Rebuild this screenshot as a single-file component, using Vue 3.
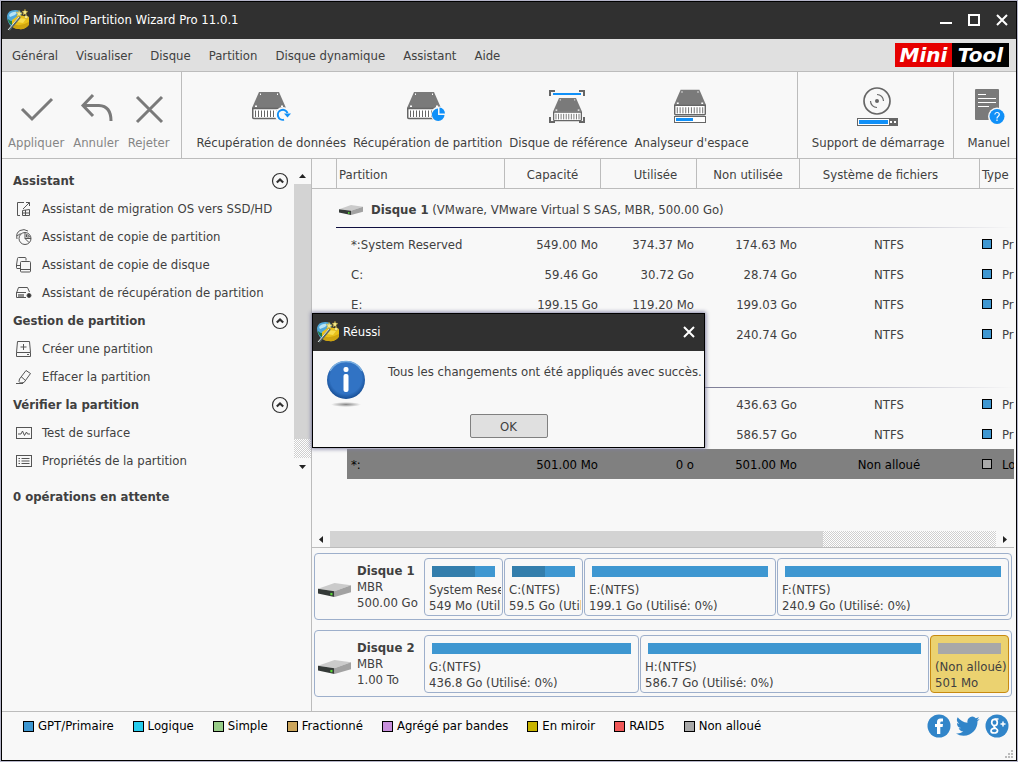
<script setup>
const menus = ['Général', 'Visualiser', 'Disque', 'Partition', 'Disque dynamique', 'Assistant', 'Aide']

const sections = [
  {
    title: 'Assistant',
    items: [
      { icon: 'migrate', label: 'Assistant de migration OS vers SSD/HD' },
      { icon: 'copy-part', label: 'Assistant de copie de partition' },
      { icon: 'copy-disk', label: 'Assistant de copie de disque' },
      { icon: 'recover', label: 'Assistant de récupération de partition' },
    ],
  },
  {
    title: 'Gestion de partition',
    items: [
      { icon: 'create', label: 'Créer une partition' },
      { icon: 'wipe', label: 'Effacer la partition' },
    ],
  },
  {
    title: 'Vérifier la partition',
    items: [
      { icon: 'surface', label: 'Test de surface' },
      { icon: 'props', label: 'Propriétés de la partition' },
    ],
  },
]

const disks = [
  {
    name: 'Disque 1',
    info: '(VMware, VMware Virtual S SAS, MBR, 500.00 Go)',
    scheme: 'MBR',
    size: '500.00 Go',
    rows: [
      { name: '*:System Reserved', cap: '549.00 Mo', used: '374.37 Mo', free: '174.63 Mo', fs: 'NTFS', type: 'Primaire' },
      { name: 'C:', cap: '59.46 Go', used: '30.72 Go', free: '28.74 Go', fs: 'NTFS', type: 'Primaire' },
      { name: 'E:', cap: '199.15 Go', used: '119.20 Mo', free: '199.03 Go', fs: 'NTFS', type: 'Primaire' },
      { name: 'F:', cap: '240.86 Go', used: '124.36 Mo', free: '240.74 Go', fs: 'NTFS', type: 'Primaire' },
    ],
    map: [
      { label: 'System Reserved', detail: '549 Mo (Utilisé: 68%)', weight: 69, used: 68 },
      { label: 'C:(NTFS)', detail: '59.5 Go (Utilisé: 52%)', weight: 69, used: 52 },
      { label: 'E:(NTFS)', detail: '199.1 Go (Utilisé: 0%)', weight: 182, used: 0 },
      { label: 'F:(NTFS)', detail: '240.9 Go (Utilisé: 0%)', weight: 222, used: 0 },
    ],
  },
  {
    name: 'Disque 2',
    info: '(VMware, VMware Virtual S SAS, MBR, 1.00 To)',
    scheme: 'MBR',
    size: '1.00 To',
    rows: [
      { name: 'G:', cap: '436.76 Go', used: '131.86 Mo', free: '436.63 Go', fs: 'NTFS', type: 'Primaire' },
      { name: 'H:', cap: '586.71 Go', used: '142.36 Mo', free: '586.57 Go', fs: 'NTFS', type: 'Primaire' },
      { name: '*:', cap: '501.00 Mo', used: '0 o', free: '501.00 Mo', fs: 'Non alloué', type: 'Logique', selected: true },
    ],
    map: [
      { label: 'G:(NTFS)', detail: '436.8 Go (Utilisé: 0%)', weight: 205, used: 0 },
      { label: 'H:(NTFS)', detail: '586.7 Go (Utilisé: 0%)', weight: 279, used: 0 },
      { label: '(Non alloué)', detail: '501 Mo', weight: 69, used: 0, selected: true },
    ],
  },
]

const legend = [
  { label: 'GPT/Primaire', cls: 'primary' },
  { label: 'Logique', cls: 'logical' },
  { label: 'Simple', cls: 'simple' },
  { label: 'Fractionné', cls: 'spanned' },
  { label: 'Agrégé par bandes', cls: 'striped' },
  { label: 'En miroir', cls: 'mirror' },
  { label: 'RAID5', cls: 'raid' },
  { label: 'Non alloué', cls: 'free' },
]
</script>

<template>
  <div class="desktop">
    <svg class="defs" aria-hidden="true">
      <symbol id="hdd" viewBox="0 0 34 28">
        <path d="M7 0H27L34 16H0Z" fill="#7a7a7a" />
        <path d="M8 1.5H9V3H8ZM25 1.5H26V3H25ZM3 13.5H5V15H3ZM29 13.5H31V15H29Z" fill="#fff" />
        <path d="M.75 16.5V25.5Q.75 26.5 1.75 26.5H32.25Q33.25 26.5 33.25 25.5V16.5Z" fill="#fff" stroke="#666" stroke-width="1.5" />
        <path d="M3.5 18.5V25M6.5 18.5V25M9.5 18.5V25M12.5 18.5V25M15.5 18.5V25M18.5 18.5V25M21.5 18.5V25M24.5 18.5V25M27.5 18.5V25M30.5 18.5V25" stroke="#666" />
      </symbol>
      <symbol id="drive" viewBox="0 0 32 12">
        <path d="M0 5L16 0L32 2L16 7Z" fill="#cbcbcb" />
        <path d="M0 5L16 7V12L0 9Z" fill="#353a38" />
        <path d="M16 7L32 2V8L16 12Z" fill="#a2a2a2" />
        <rect x="12" y="8.5" width="2" height="2" fill="#58d836" />
      </symbol>
      <symbol id="wizard" viewBox="0 0 22 22">
        <path d="M0 7Q1 1 8 1Q14 1 15 5L9 12L5 18Q0 14 0 7Z" fill="#4fa8da" />
        <path d="M2 6Q5 2 11 3L8 6L3 8Z" fill="#b9e4f5" />
        <path d="M1 10Q4 13 7 12L5 16Q1 14 1 10Z" fill="#247c43" />
        <path d="M5 11L12 6L22 8V15Q19 21 12 20Q7 20 5 17Z" fill="#e9c01a" />
        <path d="M6 15Q13 18 22 13V16Q18 21 12 20Q7 20 5 17Z" fill="#cfa410" />
        <path d="M12 9L19 10L16 14L10 13Z" fill="#f7dc4e" />
        <path d="M2 21L13 8" stroke="#566" stroke-width="2" />
        <path d="M1 21L12 8" stroke="#dde3e3" stroke-width="1" />
        <path d="M12 1L13 3.500L15.500 4L13.500 5.500L14 8L12 6.500L9.500 7.500L10.500 5L9 3L11.500 3.300ZM18 0L18.700 2L21 2.500L19 4L19.500 6L17.700 5L16 6L16.500 3.700L15 2.300L17.200 2ZM19 6L21.500 8L19 10L17 8Z" fill="#f3e98a" stroke="#a98b24" stroke-width=".4" />
      </symbol>
    </svg>

    <div class="window">
      <header class="titlebar">
        <svg class="app-icon" aria-hidden="true"><use href="#wizard" /></svg>
        <span class="title">MiniTool Partition Wizard Pro 11.0.1</span>
        <div class="controls">
          <button aria-label="Réduire"><svg width="12" height="12" viewBox="0 0 12 12"><path d="M0 9H12" stroke="#fff" stroke-width="2" /></svg></button>
          <button aria-label="Agrandir"><svg width="12" height="12" viewBox="0 0 12 12"><rect x="1" y="1" width="10" height="10" fill="none" stroke="#fff" stroke-width="2" /></svg></button>
          <button aria-label="Fermer"><svg width="12" height="12" viewBox="0 0 12 12"><path d="M1 1L11 11M11 1L1 11" stroke="#fff" stroke-width="2" /></svg></button>
        </div>
      </header>

      <nav class="menubar">
        <button v-for="m in menus" :key="m">{{ m }}</button>
        <span class="logo"><b class="mini">Mini</b><b class="tool">Tool</b></span>
      </nav>

      <div class="toolbar">
        <div class="group edit">
          <button class="dim">
            <svg class="ticon" viewBox="0 0 48 44"><path d="M10 23L20 33L40 13" fill="none" stroke="#7a7a7a" stroke-width="3" /></svg>
            <span>Appliquer</span>
          </button>
          <button class="dim">
            <svg class="ticon" viewBox="0 0 48 44"><path d="M21 9L11 19.500L21 30M11 19.500H27Q39 20 39 35" fill="none" stroke="#7a7a7a" stroke-width="3" /></svg>
            <span>Annuler</span>
          </button>
          <button class="dim">
            <svg class="ticon" viewBox="0 0 48 44"><path d="M12 11L37 36M37 11L12 36" fill="none" stroke="#7a7a7a" stroke-width="3" /></svg>
            <span>Rejeter</span>
          </button>
        </div>
        <div class="group tools">
          <button>
            <svg class="ticon" viewBox="0 0 48 44">
              <use href="#hdd" x="5" y="6" width="34" height="28" />
              <circle cx="36" cy="29" r="8" fill="#f8f8f8" />
              <path d="M37 33.700A5 5 0 1 1 40.500 27" fill="none" stroke="#1090f8" stroke-width="2" />
              <path d="M37 27.500H44L40.500 31.500Z" fill="#1090f8" />
            </svg>
            <span>Récupération de données</span>
          </button>
          <button>
            <svg class="ticon" viewBox="0 0 48 44">
              <use href="#hdd" x="3" y="6" width="34" height="28" />
              <circle cx="35" cy="28.500" r="8" fill="#f8f8f8" />
              <path d="M34 22.500V29H40.500A6.300 6.300 0 1 1 34 22.500Z" fill="#1090f8" />
              <path d="M35.500 21.500A6 6 0 0 1 41 27.500H35.500Z" fill="#1090f8" />
            </svg>
            <span>Récupération de partition</span>
          </button>
          <button>
            <svg class="ticon" viewBox="0 0 48 44">
              <path d="M6 10V5H11M35 5H40V10M40 31V36H35M11 36H6V31" fill="none" stroke="#666" stroke-width="2" />
              <path d="M9 8H37" stroke="#1090f8" stroke-width="2" />
              <use href="#hdd" x="9" y="12" width="29" height="24" />
            </svg>
            <span>Disque de référence</span>
          </button>
          <button>
            <svg class="ticon" viewBox="0 0 48 44">
              <use href="#hdd" x="6" y="3" width="32" height="28" />
              <rect x="6.500" y="30.500" width="31" height="6" fill="#fff" stroke="#666" />
              <path d="M8 33.500H25" stroke="#1090f8" stroke-width="3" />
            </svg>
            <span>Analyseur d'espace</span>
          </button>
        </div>
        <div class="group boot">
          <button>
            <svg class="ticon" viewBox="0 0 48 44">
              <circle cx="23" cy="15" r="13" fill="none" stroke="#666" stroke-width="1.700" />
              <circle cx="23" cy="15" r="2" fill="#666" />
              <path d="M23 8.500A6.500 6.500 0 0 1 29.500 15M23 21.500A6.500 6.500 0 0 1 16.500 15" fill="none" stroke="#666" stroke-width="1.200" />
              <rect x="3.500" y="32.500" width="40" height="7" fill="#fff" stroke="#666" />
              <rect x="5" y="34" width="29" height="4" fill="#1090f8" />
              <path d="M35 33H43V39H35Z" fill="#666" /><path d="M36 35H38V37H36ZM40 35H42V37H40Z" fill="#fff" />
            </svg>
            <span>Support de démarrage</span>
          </button>
        </div>
        <div class="group help">
          <button>
            <svg class="ticon" viewBox="0 0 48 44">
              <rect x="10" y="3" width="24" height="31" rx="1" fill="#7a7a7a" />
              <path d="M13 8.500H21M13 12.500H31M13 16.500H31M13 20.500H24" stroke="#fff" />
              <circle cx="32" cy="30.500" r="9" fill="#f8f8f8" /><circle cx="32" cy="30.500" r="7.500" fill="#1090f8" />
              <path d="M29.800 28.500Q30 26.500 32 26.500Q34.300 26.500 34.300 28.500Q34.300 29.500 33 30.500Q32 31.200 32 32.500M32 33.500V35" fill="none" stroke="#fff" stroke-width="1.200" />
            </svg>
            <span>Manuel</span>
          </button>
        </div>
      </div>

      <main class="body">
        <aside class="sidebar">
          <div class="side-scroll">
            <div class="side-list">
              <template v-for="s in sections" :key="s.title">
                <button class="side-head">
                  {{ s.title }}
                  <svg width="18" height="18" viewBox="0 0 18 18"><circle cx="9" cy="9" r="7.500" fill="none" stroke="#303030" stroke-width="1.200" /><path d="M5.800 10.500L9 7.500L12.200 10.500" fill="none" stroke="#303030" stroke-width="2.200" /></svg>
                </button>
                <button v-for="i in s.items" :key="i.label" class="side-item">
                  <svg width="16" height="16" viewBox="0 0 16 16" fill="none" stroke="#555">
                    <template v-if="i.icon === 'migrate'">
                      <path d="M8 1.500H1.500V14.500H4M7 8L13.500 1.500M10 1.500H13.500V5" />
                      <path d="M6.500 9.500L13.500 8.500V14.500H6.500ZM6.500 12H13.500M9.500 9V14.500" />
                    </template>
                    <template v-else-if="i.icon === 'copy-part'">
                      <circle cx="9" cy="9.500" r="6" />
                      <path d="M9 3.500V9.500H15M9 9.500L13 13.500M1 10Q-.5 4 4 1.500Q8-.5 12 2M1 7L4.500 4.500" />
                      <path d="M10.500 5.500V8H13.500Q13 6 10.500 5.500Z" />
                    </template>
                    <template v-else-if="i.icon === 'copy-disk'">
                      <path d="M4 11.500H1Q.5 11.500 .5 10.500V8L1.500 1.500Q1.500 .5 2.500 .5H9Q10 .5 10 1.500V3.500M.5 8.500H4" />
                      <rect x="4.500" y="4.500" width="10" height="10.500" rx="1" /><path d="M4.500 12.500H15" />
                    </template>
                    <template v-else-if="i.icon === 'recover'">
                      <path d="M.5 8L2.500 2.500H11.500L13.500 7M.5 7.500H10M.5 7.500V12.500H10" /><path d="M3 9V12M5 9V12M7 9V12" stroke-width="1.300" /><circle cx="13" cy="10.500" r="2" fill="#333" />
                    </template>
                    <template v-else-if="i.icon === 'create'">
                      <path d="M.5 11.500L1.500 .5H13.500L14.500 11.500V15.500H.5ZM.5 11.500H14.500M7.500 3V9M4.500 6H10.500M11 13.500H13" />
                    </template>
                    <template v-else-if="i.icon === 'wipe'">
                      <path d="M3.500 10L10 1.500L14.500 4.500L8 13.500L4.500 14L3 12.500ZM5 7.500L9.500 11.500M0 14.500H7" />
                    </template>
                    <template v-else-if="i.icon === 'surface'">
                      <rect x=".5" y="2.500" width="15" height="11" /><path d="M2 9H5L6.500 6L8.500 10.500L10.500 7L11.500 9H14" />
                    </template>
                    <template v-else>
                      <rect x=".5" y="2.500" width="15" height="11" /><path d="M2.500 5.500H4M2.500 8H4M2.500 10.500H4M5.500 5.500H13.500M5.500 8H13.500M5.500 10.500H13.500" />
                    </template>
                  </svg>
                  {{ i.label }}
                </button>
              </template>
            </div>
            <div class="vbar">
              <button aria-label="Haut"><svg width="7" height="4"><path d="M0 4L3.500 0L7 4Z" fill="#222" /></svg></button>
              <div class="vtrack"><div class="vthumb"></div></div>
              <button aria-label="Bas"><svg width="7" height="4"><path d="M0 0L3.500 4L7 0Z" fill="#222" /></svg></button>
            </div>
          </div>
          <div class="pending">0 opérations en attente</div>
        </aside>

        <section class="content">
          <div class="table-wrap">
            <table>
              <colgroup>
                <col class="c-gut"><col class="c-in"><col><col class="c-num"><col class="c-num"><col class="c-free"><col class="c-fs"><col class="c-type">
              </colgroup>
              <thead>
                <tr>
                  <th></th>
                  <th colspan="2" class="left">Partition</th>
                  <th>Capacité</th>
                  <th class="used">Utilisée</th>
                  <th>Non utilisée</th>
                  <th class="fs">Système de fichiers</th>
                  <th class="left">Type</th>
                </tr>
              </thead>
              <tbody v-for="d in disks" :key="d.name">
                <tr class="disk-row">
                  <td></td>
                  <td colspan="7">
                    <div class="disk-line">
                      <svg width="24" height="10" viewBox="0 0 32 12" preserveAspectRatio="none"><use href="#drive" /></svg>
                      <span><b>{{ d.name }}</b> {{ d.info }}</span>
                    </div>
                  </td>
                </tr>
                <tr v-for="r in d.rows" :key="r.name" class="row" :class="{ selected: r.selected }">
                  <td colspan="2" class="blank"></td>
                  <td class="name">{{ r.name }}</td>
                  <td class="num">{{ r.cap }}</td>
                  <td class="num">{{ r.used }}</td>
                  <td class="num">{{ r.free }}</td>
                  <td class="mid">{{ r.fs }}</td>
                  <td class="type"><i class="swatch small" :class="r.selected ? 'free' : 'primary'"></i>{{ r.type }}</td>
                </tr>
              </tbody>
            </table>
          </div>
          <div class="hbar">
            <button aria-label="Gauche"><svg width="4" height="7"><path d="M4 0L0 3.500L4 7Z" fill="#222" /></svg></button>
            <div class="htrack"><div class="hthumb"></div></div>
            <button aria-label="Droite"><svg width="4" height="7"><path d="M0 0L4 3.500L0 7Z" fill="#222" /></svg></button>
          </div>
          <div class="maps">
            <div v-for="d in disks" :key="d.name" class="map">
              <div class="map-info">
                <svg width="33" height="14" viewBox="0 0 32 12" preserveAspectRatio="none"><use href="#drive" /></svg>
                <div><b>{{ d.name }}</b><br>{{ d.scheme }}<br>{{ d.size }}</div>
              </div>
              <div class="map-parts">
                <button v-for="p in d.map" :key="p.label" class="part" :class="{ picked: p.selected }" :style="{ flexGrow: p.weight }">
                  <span class="bar"><span class="fill" :style="{ width: p.used + '%' }"></span></span>
                  <span class="txt">{{ p.label }}</span>
                  <span class="txt">{{ p.detail }}</span>
                </button>
              </div>
            </div>
          </div>
        </section>
      </main>

      <footer class="footer">
        <ul class="legend">
          <li v-for="l in legend" :key="l.label"><i class="swatch" :class="l.cls"></i>{{ l.label }}</li>
        </ul>
        <div class="social">
          <a href="#facebook" aria-label="Facebook">
            <svg width="24" height="24" viewBox="0 0 24 24"><circle cx="12" cy="12" r="11.500" fill="#3185c9" /><path d="M10 20V13H8V10H10V8Q10 4.500 13.500 4.500H16V7.500H14.500Q13.300 7.500 13.300 8.700V10H16L15.600 13H13.300V20Z" fill="#fff" /></svg>
          </a>
          <a href="#twitter" aria-label="Twitter">
            <svg width="24" height="24" viewBox="0 0 24 24"><path d="M23.600 4.900a9.600 9.600 0 0 1-2.800.8 4.900 4.900 0 0 0 2.100-2.700 9.700 9.700 0 0 1-3.100 1.200 4.900 4.900 0 0 0-8.300 4.500A13.900 13.900 0 0 1 1.700 3.200a4.900 4.900 0 0 0 1.500 6.500 4.900 4.900 0 0 1-2.200-.6 4.900 4.900 0 0 0 3.900 4.900 4.900 4.900 0 0 1-2.200.1 4.900 4.900 0 0 0 4.600 3.400A9.900 9.900 0 0 1 0 19.500 13.900 13.900 0 0 0 7.500 21.700c9.100 0 14.300-7.700 14-14.600a10 10 0 0 0 2.100-2.200z" fill="#3185c9" /></svg>
          </a>
          <a href="#google" aria-label="Google Plus">
            <svg width="24" height="24" viewBox="0 0 24 24"><circle cx="12" cy="12" r="11.500" fill="#3185c9" /><ellipse cx="9.500" cy="8.500" rx="2.800" ry="3.200" fill="none" stroke="#fff" stroke-width="1.700" /><path d="M13.500 5H9.500M10 11.500Q8 12.500 10 14Q13 15.500 12.500 17Q12 19 9.300 19Q6 19 6 17Q6 14.500 11 14.200" fill="none" stroke="#fff" stroke-width="1.700" /><path d="M18 7.500V12.500M15.500 10H20.500" stroke="#fff" stroke-width="1.500" /></svg>
          </a>
        </div>
        <svg class="grip" width="9" height="9" viewBox="0 0 9 9"><path d="M6 0H8V2H6ZM3 3H5V5H3ZM6 3H8V5H6ZM0 6H2V8H0ZM3 6H5V8H3ZM6 6H8V8H6Z" fill="#bbb" /></svg>
      </footer>
    </div>

    <div class="overlay">
      <div class="dialog" role="dialog" aria-labelledby="dlg-title">
        <header class="dlg-title">
          <svg class="app-icon" aria-hidden="true"><use href="#wizard" /></svg>
          <span id="dlg-title" class="title">Réussi</span>
          <button aria-label="Fermer la boîte"><svg width="12" height="12" viewBox="0 0 12 12"><path d="M1 1L11 11M11 1L1 11" stroke="#fff" stroke-width="2" /></svg></button>
        </header>
        <div class="dlg-body">
          <svg width="40" height="48" viewBox="0 0 40 48">
            <defs>
              <radialGradient id="ball" cx="50%" cy="45%" r="55%"><stop offset="75%" stop-color="#3173c4" /><stop offset="100%" stop-color="#164c92" /></radialGradient>
              <radialGradient id="shade"><stop offset="0" stop-color="#888" /><stop offset="100%" stop-color="#f8f8f8" /></radialGradient>
            </defs>
            <circle cx="20" cy="20" r="19" fill="url(#ball)" />
            <path d="M4 11A18.300 18.300 0 0 1 36 11" fill="none" stroke="#79aee0" stroke-width="1.500" />
            <ellipse cx="20" cy="44.500" rx="15" ry="2.500" fill="url(#shade)" />
            <rect x="17.500" y="7" width="5" height="5" rx="2" fill="#fff" /><rect x="17.500" y="14" width="5" height="18" rx="2" fill="#fff" />
          </svg>
          <p>Tous les changements ont été appliqués avec succès.</p>
        </div>
        <div class="dlg-foot"><button class="ok">OK</button></div>
      </div>
    </div>
  </div>
</template>

<style>
html, body { margin: 0; }
</style>

<style scoped>
* { box-sizing: border-box; }
.desktop { position: relative; display: flex; min-height: 100vh; padding: 1px; background: #b5b5c9; color: #404040; font: 13px/16px "DejaVu Sans Condensed", "DejaVu Sans", sans-serif; }
.defs { position: absolute; width: 0; height: 0; }
button { font: inherit; color: inherit; background: none; border: 0; padding: 0; margin: 0; white-space: nowrap; }
svg { display: block; flex: none; }
.window { flex: 1; min-width: 0; display: flex; flex-direction: column; border: 1px solid #000; background: #f8f8f8; }

.titlebar { display: flex; align-items: center; height: 37px; padding: 0 8px 2px 5px; background: #303030; color: #fff; }
.app-icon { width: 22px; height: 22px; margin-right: 4px; }
.title { flex: 1; }
.controls { display: flex; gap: 16px; }

.menubar { display: flex; align-items: center; gap: 18px; height: 33px; padding: 0 7px 0 10px; background: #e0e0e0; border-bottom: 1px solid #bcbcbc; }
.menubar button { padding-top: 2px; }
.logo { display: flex; margin-left: auto; height: 24px; font: italic bold 20px/24px "DejaVu Sans", sans-serif; color: #fff; }
.logo b { width: 57px; text-align: center; }
.mini { background: #e60000; }
.tool { background: #000; }

.toolbar { display: flex; height: 87px; border-bottom: 1px solid #bcbcbc; }
.group { display: flex; align-items: flex-start; gap: 9px; padding: 14px 12px 0 14px; }
.group + .group { border-left: 1px solid #bcbcbc; }
.edit { padding-left: 6px; }
.tools { flex: 1; gap: 7px; }
.boot { padding-right: 9px; }
.help { padding: 14px 6px 0 13px; }
.group button { display: flex; flex-direction: column; align-items: center; gap: 5px; }
.ticon { width: 48px; height: 44px; margin: 0 -4px; }
.dim { color: #858585; }

.body { flex: 1; display: flex; min-height: 0; }
.sidebar { flex: 0 0 309px; padding-top: 8px; }
.side-scroll { display: flex; }
.side-list { flex: 1; display: flex; flex-direction: column; padding-right: 5px; }
.side-head { display: flex; align-items: center; justify-content: space-between; height: 28px; padding-left: 11px; font-weight: bold; }
.side-item { display: flex; align-items: center; gap: 10px; height: 28px; padding-left: 14px; }
.vbar { width: 17px; display: flex; flex-direction: column; }
.vbar button { height: 17px; display: flex; align-items: center; justify-content: center; }
.vtrack { flex: 1; background: repeating-conic-gradient(#cfcfcf 0 25%, #fff 0 50%) 0 0 / 2px 2px; }
.vthumb { height: 93%; background: #d3d3d3; }
.pending { padding: 14px 11px; font-weight: bold; }

.content { flex: 1; min-width: 0; display: flex; flex-direction: column; border-left: 1px solid #bcbcbc; padding-right: 2px; }
.table-wrap { flex: 1; overflow: hidden; }
table { width: calc(100% + 80px); table-layout: fixed; border-collapse: separate; border-spacing: 0; }
.c-gut { width: 24px; }
.c-in { width: 11px; }
.c-num { width: 96px; }
.c-free { width: 103px; }
.c-fs { width: 180px; }
.c-type { width: 115px; }
td, th { padding: 0; white-space: nowrap; }
th { height: 30px; padding-top: 2px; font-weight: normal; border-bottom: 1px solid #bcbcbc; border-left: 1px solid #bcbcbc; }
th:first-child { border-left: 0; }
th.left { text-align: left; padding-left: 2px; }
th.used { padding-left: 14px; }
th.fs { padding-right: 18px; }
.disk-row td { height: 40px; vertical-align: top; }
.disk-line { display: flex; align-items: center; gap: 8px; height: 39px; padding: 4px 0 0 3px; margin-right: 80px; border-bottom: 1px solid; border-image: linear-gradient(90deg, #101040, #101040 15%, #f8f8f8) 1; }
.row td { height: 30px; padding-top: 2px; }
.row .name { padding-left: 4px; }
.row .num { text-align: right; padding-right: 2px; }
.row .mid { text-align: center; }
.row .type { padding-left: 3px; }
.selected { color: #000; }
.selected td:not(.blank) { background: #808080; }

.swatch { display: inline-block; width: 11px; height: 11px; border: 1px solid #000; }
.small { width: 10px; height: 10px; margin-right: 10px; }
.primary { background: #3e97d1; }
.logical { background: #27ccec; }
.simple { background: #98cc88; }
.spanned { background: #cca65c; }
.striped { background: #c890dc; }
.mirror { background: #c8b400; }
.raid { background: #f05858; }
.free { background: #a8a8a8; }

.hbar { display: flex; height: 17px; border-bottom: 1px solid #bcbcbc; }
.hbar button { width: 18px; display: flex; align-items: center; justify-content: center; }
.htrack { flex: 1; background: repeating-conic-gradient(#cfcfcf 0 25%, #fff 0 50%) 0 0 / 2px 2px; }
.hthumb { width: 74%; height: 100%; background: #d3d3d3; }

.maps { display: flex; flex-direction: column; gap: 10px; padding: 5px 2px 14px; }
.map { display: flex; height: 67px; border: 1px solid #9dafcb; border-radius: 4px; padding: 4px 2px 3px; }
.map-info { flex: 0 0 107px; display: flex; align-items: center; gap: 6px; padding: 0 0 0 1px; }
.map-info svg { margin-top: 6px; }
.map-parts { flex: 1; min-width: 0; display: flex; gap: 1px; }
.part { flex: 1 1 0; min-width: 0; display: flex; flex-direction: column; text-align: left; padding: 7px 4px 0; border: 1px solid #9dafcb; border-radius: 4px; }
.bar { display: block; align-self: stretch; height: 11px; margin: 0 3px 5px; background: #3e97d1; }
.fill { display: block; height: 100%; background: #337eac; }
.txt { overflow: hidden; margin-right: -3px; }
.picked { background: #ebd270; border-color: #c88a10; }
.picked .bar { background: #a8a8a8; }

.footer { position: relative; display: flex; justify-content: space-between; align-items: flex-start; height: 49px; padding: 2px 7px 0 21px; border-top: 1px solid #bcbcbc; color: #000; }
.legend { display: flex; gap: 19px; margin: 0; padding: 4px 0 0; list-style: none; }
.legend li { display: flex; align-items: center; gap: 4px; white-space: nowrap; }
.social { display: flex; gap: 5px; }
.grip { position: absolute; right: 2px; bottom: 1px; }

.overlay { position: absolute; inset: 0; padding: 0 1px 1px 0; display: flex; align-items: center; justify-content: center; pointer-events: none; }
.dialog { width: 393px; background: #f8f8f8; border: 1px solid #000; box-shadow: 0 0 4px 1px #8484a4; pointer-events: auto; }
.dlg-title { display: flex; align-items: center; height: 37px; padding: 0 9px 2px 4px; background: #303030; color: #fff; }
.dlg-body { display: flex; gap: 22px; padding: 9px 0 0 13px; height: 63px; }
.dlg-body p { margin: 4px 0 0; white-space: nowrap; }
.dlg-foot { display: flex; justify-content: center; padding-bottom: 9px; }
.ok { width: 78px; height: 24px; padding-top: 1px; background: #e0e0e0; border: 1px solid #808080; border-radius: 2px; }
</style>
